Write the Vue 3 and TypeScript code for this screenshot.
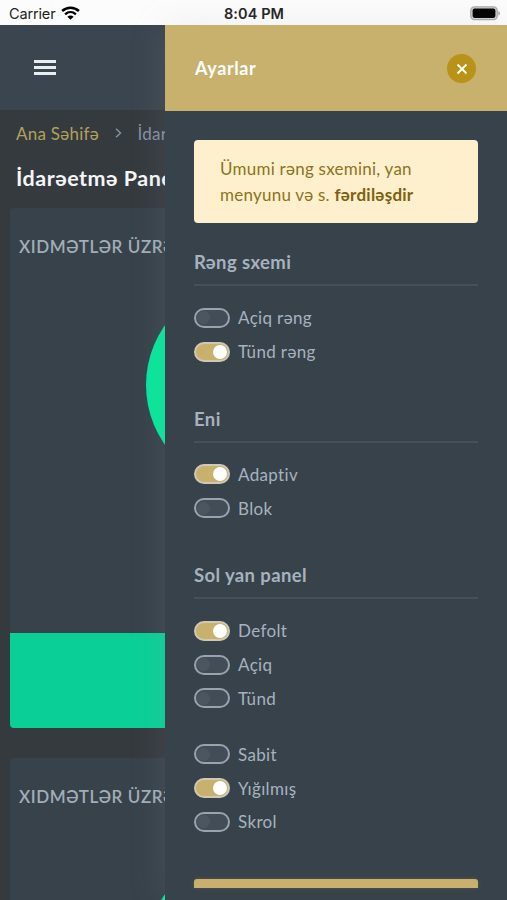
<script setup lang="ts">
interface Option {
  label: string
  on: boolean
}
interface Section {
  title: string
  groups: Option[][]
}

const sections: Section[] = [
  {
    title: 'Rəng sxemi',
    groups: [[{ label: 'Açiq rəng', on: false }, { label: 'Tünd rəng', on: true }]],
  },
  {
    title: 'Eni',
    groups: [[{ label: 'Adaptiv', on: true }, { label: 'Blok', on: false }]],
  },
  {
    title: 'Sol yan panel',
    groups: [
      [
        { label: 'Defolt', on: true },
        { label: 'Açiq', on: false },
        { label: 'Tünd', on: false },
      ],
      [
        { label: 'Sabit', on: false },
        { label: 'Yığılmış', on: true },
        { label: 'Skrol', on: false },
      ],
    ],
  },
]
</script>

<template>
  <div class="screen">
    <header class="status">
      <div class="carrier">
        <span>Carrier</span>
        <svg width="19" height="14" viewBox="0 0 19 14">
          <path d="M1.1 5C6 .6 13 .6 17.9 5" fill="none" stroke="#000" stroke-width="2.6" />
          <path d="M4.1 8.3C7.3 5.4 11.7 5.4 14.9 8.3" fill="none" stroke="#000" stroke-width="2.4" />
          <path d="M6.4 10.7C8.3 9 10.7 9 12.6 10.7L9.5 13.8Z" />
        </svg>
      </div>
      <span class="time">8:04 PM</span>
      <svg class="battery" width="31" height="15" viewBox="0 0 31 15">
        <rect x=".8" y=".8" width="26.4" height="12.9" rx="3.6" fill="#d4d4d4" stroke="#aaa" stroke-width="1.3" />
        <rect x="2.6" y="2.6" width="22.8" height="9.3" rx="1.8" />
        <path d="M28.3 4.9C30.6 5.7 30.6 8.8 28.3 9.6Z" fill="#aaa" />
      </svg>
    </header>

    <div class="body">
      <main class="page">
        <div class="topbar">
          <button class="menu" aria-label="Menyu"><i></i><i></i><i></i></button>
        </div>
        <nav class="crumbs">
          <a>Ana Səhifə</a>
          <svg width="7" height="10" viewBox="0 0 7 10"><path d="M1 .8 5.5 5 1 9.2" /></svg>
          <span>İdarəetmə Paneli</span>
        </nav>
        <h1>İdarəetmə Paneli</h1>
        <section class="card">
          <h2>XIDMƏTLƏR ÜZRƏ</h2>
          <div class="chart"><div class="pie"></div></div>
          <div class="band"></div>
        </section>
        <section class="card second">
          <h2>XIDMƏTLƏR ÜZRƏ</h2>
          <div class="chart"><div class="pie"></div></div>
        </section>
      </main>

      <aside class="drawer">
        <div class="drawer-head">
          <span>Ayarlar</span>
          <button class="close" aria-label="Bağla">
            <svg width="12" height="12" viewBox="0 0 12 12"><path d="M1.5 1.5 10.5 10.5M10.5 1.5 1.5 10.5" /></svg>
          </button>
        </div>
        <div class="settings">
          <p class="notice">
            <span class="line">Ümumi rəng sxemini, yan</span>
            <span class="line">menyunu və s. <b>fərdiləşdir</b></span>
          </p>
          <section v-for="s in sections" :key="s.title" class="section">
            <h3>{{ s.title }}</h3>
            <div v-for="(g, i) in s.groups" :key="i" class="group">
              <label v-for="o in g" :key="o.label" class="option">
                <span class="switch" :class="{ on: o.on }"><i></i></span>
                <span>{{ o.label }}</span>
              </label>
            </div>
          </section>
          <div class="action"></div>
        </div>
      </aside>
    </div>
  </div>
</template>

<style>
body {
  background: #353a3f;
}
</style>

<style scoped>
* {
  box-sizing: border-box;
}
.screen {
  width: 507px;
  height: 900px;
  overflow: hidden;
  display: flex;
  flex-direction: column;
  font-family: Lato, "Noto Sans", sans-serif;
  font-variant-ligatures: none;
  color: #a6b2bf;
}
.status {
  height: 25px;
  flex: none;
  display: grid;
  grid-template-columns: 1fr auto 1fr;
  align-items: center;
  padding: 2px 6px 0 9px;
  background: #fcfcfc;
  color: #222;
  font: 14.5px/23px Inter, sans-serif;
}
.carrier {
  display: flex;
  align-items: center;
  gap: 6px;
  letter-spacing: -0.15px;
}
.carrier svg {
  margin-top: -2px;
}
.time {
  margin-left: -2px;
  font-weight: 600;
  letter-spacing: 0.1px;
}
.battery {
  justify-self: end;
  margin-top: -1px;
}
.body {
  position: relative;
  flex: 1;
  min-height: 0;
}
.page {
  height: 875px;
  overflow: hidden;
}
.topbar {
  height: 85px;
  background: #3b454f;
  display: flex;
  align-items: center;
  padding-left: 34px;
}
.menu {
  border: 0;
  padding: 0;
  background: none;
  width: 22px;
  display: grid;
  gap: 3px;
}
.menu i {
  height: 3px;
  background: #e8edf2;
}
.crumbs {
  height: 46px;
  padding-left: 16px;
  display: flex;
  align-items: center;
  font-size: 17px;
  letter-spacing: 0.25px;
  white-space: nowrap;
  color: #8391a0;
}
.crumbs a {
  width: 83px;
  color: #b3a15b;
}
.crumbs svg {
  margin: 0 15.5px 0 16px;
  fill: none;
  stroke: #8391a0;
  stroke-width: 1.5;
}
h1 {
  margin: 0;
  height: 52px;
  padding-left: 16px;
  font-size: 21.5px;
  letter-spacing: 0.5px;
  line-height: 44px;
  font-weight: 700;
  white-space: nowrap;
  color: #f4f5f6;
}
.card {
  width: 488px;
  height: 520px;
  margin-left: 10px;
  border-radius: 4px;
  background: #38424b;
  overflow: hidden;
  display: flex;
  flex-direction: column;
}
h2 {
  margin: 0;
  padding: 28px 0 0 9px;
  font-size: 17px;
  letter-spacing: 0.58px;
  line-height: 22px;
  font-weight: 600;
  white-space: nowrap;
  color: #a1adb8;
}
.chart {
  flex: 1;
  display: flex;
  padding: 23px 0 0 136px;
}
.pie {
  width: 208px;
  height: 208px;
  border-radius: 50%;
  background: #08e69b;
}
.band {
  height: 95px;
  background: #0acf97;
}
.second {
  margin-top: 30px;
}
.second .pie {
  margin-top: 19px;
}
.drawer {
  position: absolute;
  top: 0;
  left: 165px;
  width: 342px;
  height: 875px;
  background: #38424b;
  box-shadow: 0 0 35px rgba(154, 161, 171, 0.16);
  overflow: hidden;
}
.drawer-head {
  height: 86px;
  padding: 0 31px 0 30px;
  display: flex;
  align-items: center;
  justify-content: space-between;
  background: #c8b16c;
  color: #fff;
  font-size: 18px;
  letter-spacing: 0.6px;
  font-weight: 700;
}
.close {
  width: 29px;
  height: 29px;
  padding: 1px 0 0;
  border: 0;
  border-radius: 50%;
  background: #b99318;
  display: grid;
  place-items: center;
}
.close svg {
  stroke: #fff;
  stroke-width: 1.8;
}
.settings {
  padding: 29px 29px 0;
}
.notice {
  margin: 0 0 28px;
  height: 83px;
  padding: 16px 0 0 26px;
  border-radius: 4px;
  background: #fff0cd;
  color: #8b7420;
  font-size: 17px;
  letter-spacing: 0.24px;
  line-height: 26px;
}
.notice b {
  color: #7c6110;
}
.line {
  display: block;
  white-space: nowrap;
}
.section {
  height: 156.5px;
}
.section:nth-of-type(3) {
  height: 314.5px;
}
h3 {
  margin: 0 0 15px;
  height: 35px;
  border-bottom: 2px solid #46505a;
  font-size: 18.5px;
  letter-spacing: 0.38px;
  line-height: 22px;
  font-weight: 700;
}
.group + .group {
  margin-top: 22px;
}
.option {
  height: 33.8px;
  display: flex;
  align-items: center;
  gap: 8px;
  font-size: 17px;
  letter-spacing: 0.35px;
}
.switch {
  width: 36px;
  height: 20px;
  flex: none;
  border: 2px solid #98a3ae;
  border-radius: 10px;
  background: #434d57;
  display: flex;
  align-items: center;
  padding: 0 1px;
}
.switch i {
  width: 13px;
  height: 13px;
  border-radius: 50%;
  background: #4c5660;
}
.switch.on {
  justify-content: flex-end;
  border-color: #cfc8b6;
  background: #c8b16c;
}
.switch.on i {
  width: 14px;
  height: 14px;
  background: #fff;
}
.action {
  height: 9px;
  border-radius: 3px 3px 0 0;
  background: #c8b16c;
  box-shadow: 0 0 5px rgba(200, 177, 108, 0.2);
}
</style>
